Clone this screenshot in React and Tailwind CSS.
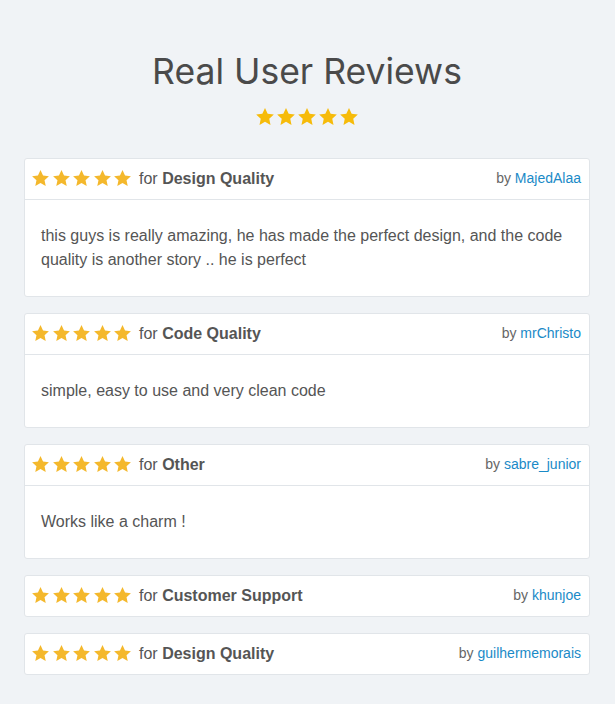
import React from "react";

const reviews = [
  { topic: "Design Quality", author: "MajedAlaa", text: "this guys is really amazing, he has made the perfect design, and the code quality is another story .. he is perfect" },
  { topic: "Code Quality", author: "mrChristo", text: "simple, easy to use and very clean code" },
  { topic: "Other", author: "sabre_junior", text: "Works like a charm !" },
  { topic: "Customer Support", author: "khunjoe" },
  { topic: "Design Quality", author: "guilhermemorais" },
];

const Star = ({ className }) => (
  <svg viewBox="0 0 24 24" className={className} fill="currentColor">
    <path d="M12 1.2l3.2 6.9 7.4.9-5.5 5.1 1.5 7.4L12 17.8l-6.6 3.7 1.5-7.4L1.4 9l7.4-.9z" />
  </svg>
);

const Stars = ({ size, color, gap }) => (
  <div className={`flex ${gap} ${color}`}>
    {[0, 1, 2, 3, 4].map((i) => (
      <Star key={i} className={size} />
    ))}
  </div>
);

const ReviewCard = ({ review }) => (
  <div className="bg-white border border-[#e1e5e9] rounded-[3px]">
    <div className={`h-[40px] ${review.text ? "box-content border-b border-[#e1e5e9]" : ""} flex items-center justify-between pl-[6px] pr-[8px]`}>
      <div className="flex items-center">
        <Stars size="w-[19px] h-[19px]" color="text-[#f4b82c]" gap="gap-[1.5px]" />
        <span className="ml-[7px] text-[16px] text-[#555]">
          for <strong className="font-bold">{review.topic}</strong>
        </span>
      </div>
      <span className="text-[14px] text-[#666]">
        by <a className="text-[#1a8ac7]">{review.author}</a>
      </span>
    </div>
    {review.text && (
      <p className="px-4 py-6 text-[16px] leading-6 text-[#555]">{review.text}</p>
    )}
  </div>
);

export default function App() {
  return (
    <div className="min-h-[704px] bg-[#f0f3f6] pl-6 pr-[25px] pt-[51px] pb-8" style={{ fontFamily: "'Liberation Sans', Arial, sans-serif" }}>
      <h1
        className="text-center text-[35.5px] leading-[1.2] text-[#4a4a4a]"
        style={{ fontFamily: "Inter, 'Noto Sans', sans-serif" }}
      >
        Real User Reviews
      </h1>
      <div className="flex justify-center mt-[13px]">
        <Stars size="w-[20px] h-[20px]" color="text-[#f6bb0a]" gap="gap-[1px]" />
      </div>
      <div className="mt-[31px] flex flex-col gap-4">
        {reviews.map((r, i) => (
          <ReviewCard key={i} review={r} />
        ))}
      </div>
    </div>
  );
}
